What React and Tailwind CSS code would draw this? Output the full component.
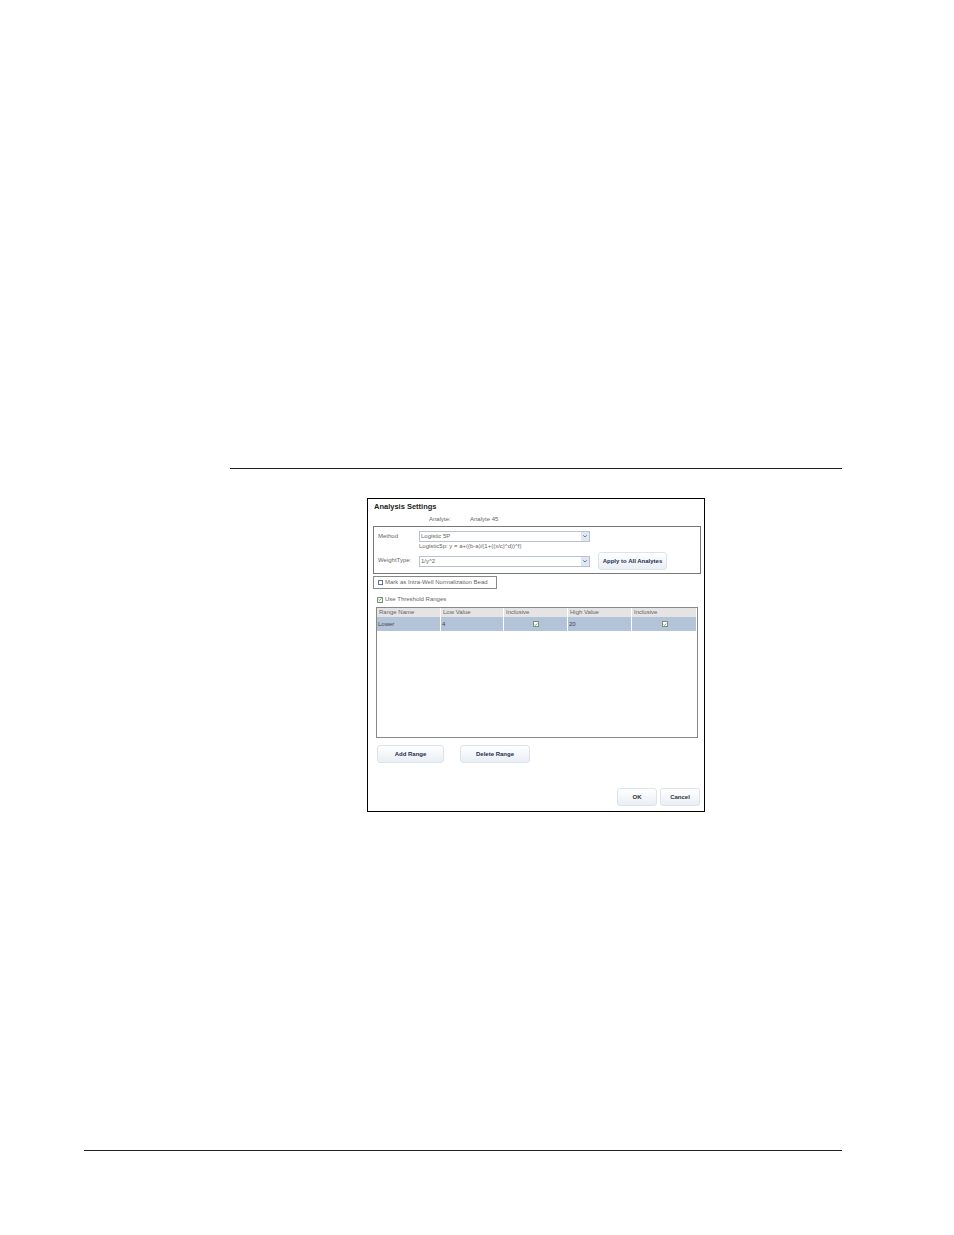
import React from "react";

function Check({ className = "" }) {
  return (
    <span className={"flex h-[6px] w-[6px] items-center justify-center border border-[#7f8f7f] bg-white " + className}>
      <svg viewBox="0 0 6 6" className="h-[5px] w-[5px]">
        <path d="M1 3l1.3 1.4L5 1.4" fill="none" stroke="#3f9a3f" strokeWidth="1.2" />
      </svg>
    </span>
  );
}

function Select({ value, className = "" }) {
  return (
    <div className={"flex h-[11px] w-[171px] items-center justify-between border border-[#b9c2d0] bg-white pb-[1px] pl-[1px] " + className}>
      <span className="text-[6px] leading-none text-[#666]">{value}</span>
      <span className="flex h-[9px] w-[8px] items-center justify-center bg-[#dfe7f3]">
        <svg viewBox="0 0 6 4" className="w-[4px]">
          <path d="M0.5 0.5L3 3.2L5.5 0.5" fill="none" stroke="#44587c" strokeWidth="1.2" />
        </svg>
      </span>
    </div>
  );
}

function Btn({ children, className = "" }) {
  return (
    <div className={"flex h-[18px] items-center justify-center rounded-[3px] border border-[#dde3ea] bg-gradient-to-b from-white to-[#e9eef5] text-[6px] font-bold " + className}>
      {children}
    </div>
  );
}

const cols = [
  { head: "Range Name", cell: "Lower", w: "w-[64px]" },
  { head: "Low Value", cell: "4", w: "w-[63px]" },
  { head: "Inclusive", check: true, w: "w-[64px]" },
  { head: "High Value", cell: "20", w: "w-[64px]" },
  { head: "Inclusive", check: true, w: "w-[65px]" },
];

export default function App() {
  return (
    <div className="h-[1235px] w-[954px] overflow-hidden bg-white pt-[468px] font-['Liberation_Sans',Arial,sans-serif]">
      <div className="ml-[230px] h-px w-[612px] bg-[#222]" />

      <div className="ml-[367px] mt-[29px] h-[314px] w-[338px] border border-black pl-[5px] pr-[4px] pt-[3px] text-[#666]">
        <div className="pl-[1px] text-[7.5px] font-bold leading-[9px] text-[#222]">Analysis Settings</div>
        <div className="flex pt-[4px] text-[6px] leading-[9px]">
          <span className="ml-[56px] w-[41px]">Analyte:</span>
          <span>Analyte 45</span>
        </div>

        <div className="mt-[2px] flex h-[48px] w-[328px] border border-[#777]">
          <div className="w-[45px] pl-[4px] text-[6px] leading-none">
            <div className="pt-[6px]">Method</div>
            <div className="pt-[18px]">WeightType:</div>
          </div>
          <div className="pt-[4px]">
            <Select value="Logistic 5P" />
            <div className="text-[6px] leading-[9px]">Logistic5p: y = a+((b-a)/(1+((x/c)^d))^f)</div>
            <Select value="1/y^2" className="mt-[5px]" />
          </div>
          <Btn className="ml-[8px] mt-[25px] w-[69px] text-[#1d2f52]">Apply to All Analytes</Btn>
        </div>

        <div className="mt-[2px] flex h-[13px] w-[124px] items-center gap-[2px] whitespace-nowrap border border-[#888] pl-[4px] text-[6px]">
          <span className="h-[5px] w-[5px] shrink-0 border border-[#66708a] bg-white" />
          Mark as Intra-Well Normalization Bead
        </div>

        <div className="flex items-center gap-[2px] pl-[4px] pt-[6px] text-[6px] leading-[9px]">
          <Check />
          Use Threshold Ranges
        </div>

        <div className="ml-[3px] mt-[3px] h-[131px] w-[322px] border border-[#888]">
          <div className="flex h-[9px] bg-[#e4e4e4]">
            {cols.map((c, i) => (
              <div key={i} className={"border-r border-white pl-[2px] text-[6px] leading-[9px] " + c.w}>
                {c.head}
              </div>
            ))}
          </div>
          <div className="flex h-[14px] bg-[#b4c4d8]">
            {cols.map((c, i) => (
              <div key={i} className={"flex items-center border-r border-white pl-[1px] text-[6px] text-[#444] " + c.w}>
                {c.check ? <Check className="mx-auto" /> : c.cell}
              </div>
            ))}
          </div>
        </div>

        <div className="mt-[7px] flex pl-[4px]">
          <Btn className="w-[67px] text-[#1d2f52]">Add Range</Btn>
          <Btn className="ml-[16px] w-[70px] text-[#1d2f52]">Delete Range</Btn>
        </div>

        <div className="mt-[25px] flex justify-end gap-[3px]">
          <Btn className="w-[40px] text-[#333]">OK</Btn>
          <Btn className="w-[40px] text-[#333]">Cancel</Btn>
        </div>
      </div>

      <div className="ml-[84px] mt-[338px] h-px w-[758px] bg-[#222]" />
    </div>
  );
}
